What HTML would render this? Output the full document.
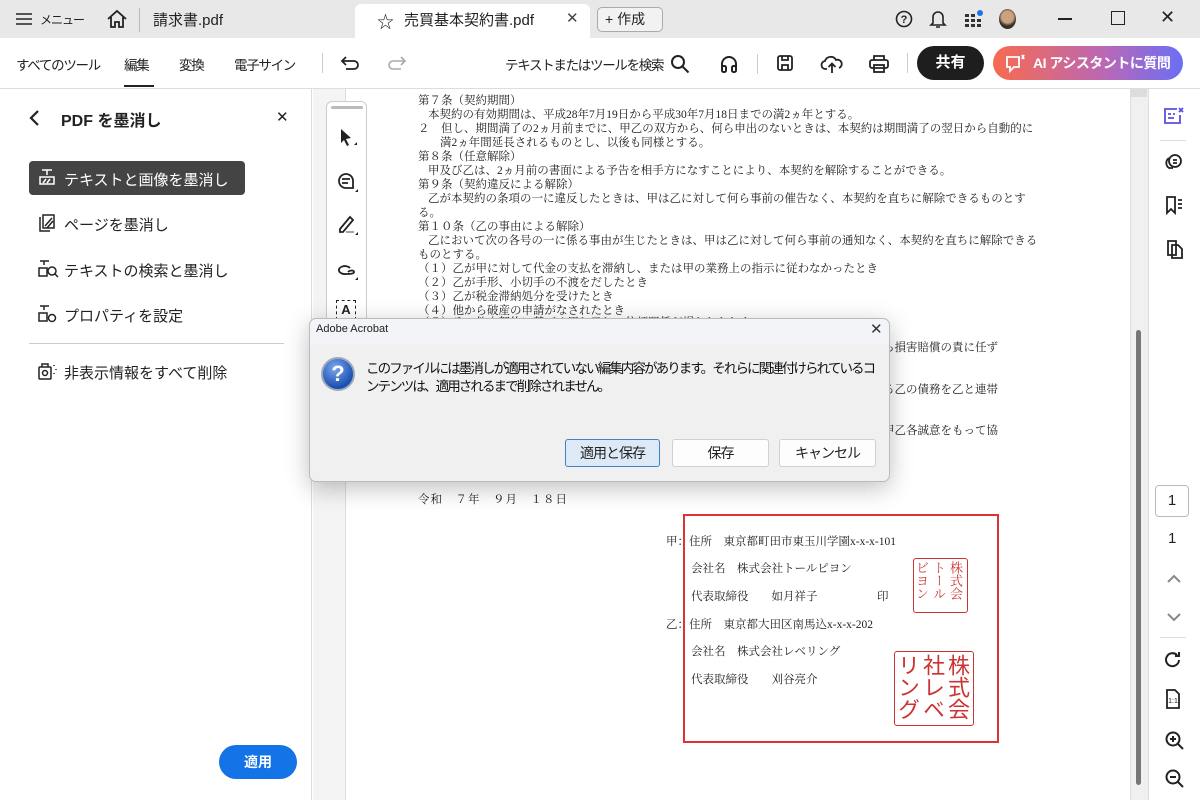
<!DOCTYPE html>
<html><head><meta charset="utf-8"><style>
*{box-sizing:border-box;margin:0;padding:0}
body{width:1200px;height:800px;overflow:hidden;position:relative;background:#fff;font-family:"Liberation Sans","Noto Sans CJK JP",sans-serif;color:#222}
.abs{position:absolute}
.tb{left:0;top:0;width:1200px;height:38px;background:#e8e8e8}
.t{position:absolute;white-space:nowrap}
.tool{left:0;top:38px;width:1200px;height:51px;background:#fff;border-bottom:1px solid #ddd}
.tt{position:absolute;white-space:nowrap;font-size:13.5px;letter-spacing:-1.3px;top:54px}
.doc{font-family:"Liberation Serif","Noto Serif CJK SC",serif;font-size:11.5px;color:#222;white-space:nowrap;position:absolute}
.side span{position:absolute;font-size:15px;white-space:nowrap}
.btn{position:absolute;top:439px;height:28px;background:#fdfdfd;border:1px solid #d0d0d0;border-radius:3px;font-size:14px;text-align:center;line-height:26px;letter-spacing:-1px}
svg{position:absolute}
.stamp{overflow:hidden;color:#c33;writing-mode:vertical-rl;border:1.5px solid #c33;border-radius:3px;position:absolute}
</style></head><body>
<div class="abs tb"></div>
<div class="abs" style="left:355px;top:4px;width:235px;height:34px;background:#fff;border-radius:6px 6px 0 0"></div>
<svg style="left:15px;top:12px" width="18" height="14"><path d="M1 2h16M1 7h16M1 12h16" stroke="#222" stroke-width="1.6"/></svg>
<div class="t" style="left:40px;top:11px;font-size:12px;letter-spacing:-1px">メニュー</div>
<svg style="left:106px;top:9px" width="22" height="20" fill="none" stroke="#222" stroke-width="1.8"><path d="M2 10L11 2l9 8M5 8v10h4v-5h4v5h4V8"/></svg>
<div class="abs" style="left:139px;top:8px;width:1px;height:24px;background:#bbb"></div>
<div class="t" style="left:153px;top:9px;font-size:15px">請求書.pdf</div>
<div class="t" style="left:377px;top:8px;font-size:17px">☆</div>
<div class="t" style="left:404px;top:9px;font-size:15px">売買基本契約書.pdf</div>
<div class="t" style="left:566px;top:9px;font-size:15px;color:#444">✕</div>
<div class="abs" style="left:597px;top:7px;width:66px;height:25px;border:1px solid #aaa;border-radius:5px;background:#f2f2f2"></div>
<div class="t" style="left:605px;top:9px;font-size:14px">+ 作成</div>
<svg style="left:895px;top:10px" width="18" height="18" fill="none" stroke="#222" stroke-width="1.6"><circle cx="9" cy="9" r="7.5"/><text x="9" y="13" font-size="11" text-anchor="middle" fill="#222" stroke="none" font-family="Liberation Sans" font-weight="bold">?</text></svg>
<svg style="left:929px;top:9px" width="18" height="20" fill="none" stroke="#222" stroke-width="1.6"><path d="M4 14V8a5 5 0 0110 0v6l2 2H2zM7 18h4"/></svg>
<svg style="left:964px;top:10px" width="20" height="18" fill="#333"><rect x="1" y="4" width="4" height="3"/><rect x="7" y="4" width="4" height="3"/><rect x="1" y="9" width="4" height="3"/><rect x="7" y="9" width="4" height="3"/><rect x="13" y="9" width="4" height="3"/><rect x="1" y="14" width="4" height="3"/><rect x="7" y="14" width="4" height="3"/><rect x="13" y="14" width="4" height="3"/><circle cx="16" cy="3" r="3" fill="#1a73e8"/></svg>
<div class="abs" style="left:999px;top:9px;width:17px;height:20px;border-radius:50%;background:radial-gradient(circle at 50% 40%,#c9a27f 0 40%,#3a3029 60%)"></div>
<div class="abs" style="left:1058px;top:18px;width:14px;height:1.5px;background:#222"></div>
<div class="abs" style="left:1111px;top:11px;width:14px;height:14px;border:1.5px solid #222"></div>
<div class="t" style="left:1160px;top:7px;font-size:18px;color:#222">✕</div>

<div class="abs tool"></div>
<div class="tt" style="left:16px">すべてのツール</div>
<div class="tt" style="left:124px">編集</div>
<div class="abs" style="left:124px;top:85px;width:30px;height:2px;background:#222"></div>
<div class="tt" style="left:179px">変換</div>
<div class="tt" style="left:234px">電子サイン</div>
<div class="abs" style="left:322px;top:53px;width:1px;height:20px;background:#ccc"></div>
<svg style="left:340px;top:55px" width="22" height="16" fill="none" stroke="#222" stroke-width="1.8"><path d="M6 2L2 6l4 4M2 6h12a4 4 0 010 8H6"/></svg>
<svg style="left:387px;top:55px" width="22" height="16" fill="none" stroke="#aaa" stroke-width="1.6"><path d="M14 2l4 4-4 4M18 6H6a4 4 0 000 8h8"/></svg>
<div class="tt" style="left:505px">テキストまたはツールを検索</div>
<svg style="left:670px;top:54px" width="20" height="20" fill="none" stroke="#222" stroke-width="2"><circle cx="8" cy="8" r="6"/><path d="M12.5 12.5l6 6"/></svg>
<svg style="left:719px;top:54px" width="20" height="20" fill="none" stroke="#222" stroke-width="2"><path d="M3 15v-5a7 7 0 0114 0v5"/><rect x="3" y="12" width="4" height="6" rx="1.5"/><rect x="13" y="12" width="4" height="6" rx="1.5"/></svg>
<div class="abs" style="left:757px;top:54px;width:1px;height:20px;background:#ccc"></div>
<svg style="left:776px;top:54px" width="18" height="18" fill="none" stroke="#222" stroke-width="1.8"><rect x="2" y="2" width="14" height="14" rx="2"/><path d="M6 2v4h6V2M6 16v-5h6v5"/></svg>
<svg style="left:820px;top:53px" width="24" height="22" fill="none" stroke="#222" stroke-width="1.8"><path d="M7 16H6a4 4 0 01-1-8 6 6 0 0111-1 4 4 0 013 8M12 20v-9M8.5 14l3.5-3.5 3.5 3.5"/></svg>
<svg style="left:868px;top:54px" width="22" height="20" fill="none" stroke="#222" stroke-width="1.8"><path d="M6 6V2h10v4"/><rect x="2" y="6" width="18" height="8" rx="2"/><rect x="6" y="11" width="10" height="7"/></svg>
<div class="abs" style="left:907px;top:53px;width:1px;height:20px;background:#ccc"></div>
<div class="abs" style="left:917px;top:46px;width:67px;height:34px;border-radius:17px;background:#1e1e1e;color:#fff;font-size:15px;text-align:center;line-height:34px;font-weight:bold">共有</div>
<div class="abs" style="left:993px;top:46px;width:190px;height:34px;border-radius:17px;background:linear-gradient(90deg,#f76b4f,#b868b7 60%,#6a6ff5);color:#fff;font-size:14px;line-height:34px;font-weight:bold;padding-left:40px;letter-spacing:-0.5px">AI アシスタントに質問</div>
<svg style="left:1005px;top:53px" width="22" height="20" fill="none" stroke="#fff" stroke-width="1.8"><path d="M2 4h12v10H9l-4 4v-4H2z"/><path d="M17 2l2 4M19 2l-2 4" /></svg>

<!-- left panel -->
<div class="abs" style="left:0;top:89px;width:312px;height:711px;background:#fff;border-right:1px solid #ddd"></div>
<svg style="left:27px;top:109px" width="14" height="18" fill="none" stroke="#222" stroke-width="2.2"><path d="M11 2L4 9l7 7"/></svg>
<div class="t" style="left:61px;top:107px;font-size:16px;font-weight:bold">PDF を墨消し</div>
<div class="t" style="left:276px;top:108px;font-size:15px">✕</div>
<div class="abs" style="left:29px;top:161px;width:216px;height:34px;border-radius:4px;background:#444"></div>
<div class="side">
<span style="left:64px;top:169px;color:#fff">テキストと画像を墨消し</span>
<span style="left:64px;top:214px">ページを墨消し</span>
<span style="left:64px;top:260px">テキストの検索と墨消し</span>
<span style="left:64px;top:305px">プロパティを設定</span>
<span style="left:64px;top:362px">非表示情報をすべて削除</span>
</div>
<svg style="left:38px;top:168px" width="18" height="18" fill="none" stroke="#fff" stroke-width="1.5"><path d="M4 2h10M9 2v5"/><rect x="2" y="9" width="14" height="7"/><path d="M5 15l3-4M9 15l3-4"/></svg>
<svg style="left:37px;top:213px" width="20" height="20" fill="none" stroke="#222" stroke-width="1.5"><path d="M3 4v14h10"/><rect x="6" y="2" width="11" height="13"/><path d="M8 13l7-8M10 15l6-7"/></svg>
<svg style="left:37px;top:259px" width="22" height="20" fill="none" stroke="#222" stroke-width="1.5"><path d="M3 2h9M7 2v4"/><rect x="2" y="9" width="8" height="8"/><circle cx="15" cy="12" r="4"/><path d="M18 15l3 3"/></svg>
<svg style="left:37px;top:304px" width="22" height="20" fill="none" stroke="#222" stroke-width="1.5"><path d="M3 2h9M7 2v4"/><rect x="2" y="9" width="8" height="8"/><circle cx="15" cy="14" r="3.5"/></svg>
<div class="abs" style="left:29px;top:343px;width:255px;height:1px;background:#ccc"></div>
<svg style="left:37px;top:361px" width="22" height="20" fill="none" stroke="#222" stroke-width="1.5"><rect x="2" y="6" width="12" height="12" rx="1"/><path d="M5 6V3h6v3"/><circle cx="8" cy="12" r="2.5"/><path d="M17 4v1M19 8v1M17 12v1"/></svg>
<div class="abs" style="left:219px;top:745px;width:78px;height:34px;border-radius:17px;background:#1473e6;color:#fff;font-size:14px;font-weight:bold;text-align:center;line-height:34px">適用</div>

<!-- doc area -->
<div class="abs" style="left:313px;top:89px;width:817px;height:711px;background:#f4f4f4"></div>
<div class="abs" style="left:345px;top:89px;width:785px;height:711px;background:#fff;border-left:1px solid #ddd"></div>
<div class="abs" style="left:326px;top:101px;width:41px;height:225px;background:#fff;border:1px solid #ccc;border-radius:6px"></div>
<div class="abs" style="left:331px;top:106px;width:32px;height:3px;background:#bbb;border-radius:2px"></div>
<svg style="left:338px;top:127px" width="20" height="22" fill="#222"><path d="M3 2l10 9-5 1 3 6-2 1-3-6-3 3z"/><path d="M16 18h3v-3z"/></svg>
<svg style="left:336px;top:171px" width="24" height="24" fill="none" stroke="#222" stroke-width="1.8"><path d="M10 3a7 7 0 100 14h7v-7a7 7 0 00-7-7zM6 8h8M6 12h6"/><path d="M19 21h3v-3z" fill="#222" stroke="none"/></svg>
<svg style="left:336px;top:213px" width="24" height="24" fill="none" stroke="#222" stroke-width="1.8"><path d="M4 16L14 4l3 3L7 19H4z"/><path d="M10 19h8" stroke="#999"/><path d="M19 22h3v-3z" fill="#222" stroke="none"/></svg>
<svg style="left:336px;top:258px" width="24" height="24" fill="none" stroke="#222" stroke-width="1.8"><path d="M14 10a6 4 0 10-4 6c3 0 8 0 8-2s-4-2-6 0"/><path d="M19 22h3v-3z" fill="#222" stroke="none"/></svg>
<div class="abs" style="left:336px;top:300px;width:20px;height:20px;border:1.5px dashed #222;font-size:13px;font-weight:bold;text-align:center;line-height:17px">A</div>

<div class="doc" style="left:418px;top:92px">第７条（契約期間）</div>
<div class="doc" style="left:428px;top:106px">本契約の有効期間は、平成28年7月19日から平成30年7月18日までの満2ヵ年とする。</div>
<div class="doc" style="left:418px;top:120px">２　但し、期間満了の2ヵ月前までに、甲乙の双方から、何ら申出のないときは、本契約は期間満了の翌日から自動的に</div>
<div class="doc" style="left:440px;top:134px">満2ヵ年間延長されるものとし、以後も同様とする。</div>
<div class="doc" style="left:418px;top:148px">第８条（任意解除）</div>
<div class="doc" style="left:428px;top:162px">甲及び乙は、2ヵ月前の書面による予告を相手方になすことにより、本契約を解除することができる。</div>
<div class="doc" style="left:418px;top:176px">第９条（契約違反による解除）</div>
<div class="doc" style="left:428px;top:190px">乙が本契約の条項の一に違反したときは、甲は乙に対して何ら事前の催告なく、本契約を直ちに解除できるものとす</div>
<div class="doc" style="left:418px;top:204px">る。</div>
<div class="doc" style="left:418px;top:218px">第１０条（乙の事由による解除）</div>
<div class="doc" style="left:428px;top:232px">乙において次の各号の一に係る事由が生じたときは、甲は乙に対して何ら事前の通知なく、本契約を直ちに解除できる</div>
<div class="doc" style="left:418px;top:246px">ものとする。</div>
<div class="doc" style="left:418px;top:260px">（１）乙が甲に対して代金の支払を滞納し、または甲の業務上の指示に従わなかったとき</div>
<div class="doc" style="left:418px;top:274px">（２）乙が手形、小切手の不渡をだしたとき</div>
<div class="doc" style="left:418px;top:288px">（３）乙が税金滞納処分を受けたとき</div>
<div class="doc" style="left:418px;top:302px">（４）他から破産の申請がなされたとき</div>
<div class="doc" style="left:418px;top:314px">（５）その他本契約に基づく甲と乙との信頼関係が損われたとき</div>
<div class="doc" style="left:860px;top:339px">て何ら損害賠償の責に任ず</div>
<div class="doc" style="left:860px;top:381px">対する乙の債務を乙と連帯</div>
<div class="doc" style="left:860px;top:422px">は、甲乙各誠意をもって協</div>
<div class="doc" style="left:418px;top:491px;letter-spacing:1px">令和　７年　９月　１８日</div>

<div class="abs" style="left:683px;top:514px;width:316px;height:229px;border:2px solid #d33"></div>
<div class="doc" style="left:666px;top:533px">甲：住所　東京都町田市東玉川学園x-x-x-101</div>
<div class="doc" style="left:691px;top:560px">会社名　株式会社トールピヨン</div>
<div class="doc" style="left:691px;top:588px">代表取締役　　如月祥子</div>
<div class="doc" style="left:877px;top:588px">印</div>
<div class="doc" style="left:666px;top:616px">乙：住所　東京都大田区南馬込x-x-x-202</div>
<div class="doc" style="left:691px;top:643px">会社名　株式会社レベリング</div>
<div class="doc" style="left:691px;top:671px">代表取締役　　刈谷亮介</div>
<div class="stamp" style="left:913px;top:558px;width:55px;height:55px;font-size:13px;line-height:17px;padding:2px;font-family:'Noto Serif CJK SC',serif">株式会トールビヨン</div>
<div class="stamp" style="left:894px;top:651px;width:80px;height:75px;font-size:22px;line-height:25px;padding:2px;font-family:'Noto Sans CJK JP',sans-serif">株式会社レベリング</div>

<!-- scrollbar -->
<div class="abs" style="left:1130px;top:89px;width:18px;height:711px;background:#f0f0f0;border-left:1px solid #ddd"></div>
<div class="abs" style="left:1130px;top:89px;width:17px;height:8px;background:#ddd"></div>
<div class="abs" style="left:1136px;top:330px;width:5px;height:455px;background:#777;border-radius:3px"></div>
<!-- right rail -->
<div class="abs" style="left:1148px;top:89px;width:52px;height:711px;background:#fff;border-left:1px solid #ddd"></div>
<svg style="left:1163px;top:106px" width="22" height="20" fill="none" stroke="#5b4ee0" stroke-width="1.8"><path d="M14 3H2v14h15V9"/><path d="M5 8h3M5 12h6M10 8h2"/><path d="M16 2l4 4M20 2l-4 4"/></svg>
<div class="abs" style="left:1160px;top:140px;width:26px;height:1px;background:#ddd"></div>
<svg style="left:1163px;top:152px" width="22" height="20" fill="none" stroke="#222" stroke-width="1.8"><circle cx="12" cy="9" r="6"/><path d="M6 6a6 6 0 000 10h4M10 8h4M10 11h4"/></svg>
<svg style="left:1164px;top:195px" width="20" height="20" fill="none" stroke="#222" stroke-width="1.8"><path d="M3 2h8v16l-4-4-4 4zM14 5h4M14 9h4M14 13h4"/></svg>
<svg style="left:1164px;top:237px" width="20" height="22" fill="none" stroke="#222" stroke-width="1.8"><path d="M4 4h8v14H4z"/><path d="M8 8h6l4 4v9H8z"/></svg>
<div class="abs" style="left:1155px;top:485px;width:34px;height:32px;border:1px solid #bbb;border-radius:4px;text-align:center;line-height:30px;font-size:15px">1</div>
<div class="t" style="left:1168px;top:530px;font-size:15px">1</div>
<svg style="left:1165px;top:572px" width="18" height="14" fill="none" stroke="#888" stroke-width="2"><path d="M3 10l6-6 6 6"/></svg>
<svg style="left:1165px;top:610px" width="18" height="14" fill="none" stroke="#888" stroke-width="2"><path d="M3 4l6 6 6-6"/></svg>
<div class="abs" style="left:1160px;top:637px;width:26px;height:1px;background:#ddd"></div>
<svg style="left:1163px;top:650px" width="20" height="20" fill="none" stroke="#222" stroke-width="2"><path d="M16 10a6.5 6.5 0 11-2-5M16 2v4h-4"/></svg>
<svg style="left:1163px;top:688px" width="22" height="22" fill="none" stroke="#222" stroke-width="1.8"><path d="M4 2h8l4 4v14H4z"/><text x="10" y="15" font-size="7" text-anchor="middle" fill="#222" stroke="none" font-family="Liberation Sans">1:1</text></svg>
<svg style="left:1164px;top:730px" width="22" height="22" fill="none" stroke="#222" stroke-width="2"><circle cx="9" cy="9" r="6.5"/><path d="M14 14l5 5M6 9h6M9 6v6"/></svg>
<svg style="left:1164px;top:768px" width="22" height="22" fill="none" stroke="#222" stroke-width="2"><circle cx="9" cy="9" r="6.5"/><path d="M14 14l5 5M6 9h6"/></svg>

<!-- dialog -->
<div class="abs" style="left:309px;top:318px;width:581px;height:164px;background:#f0f0f0;border:1px solid #bbb;border-radius:7px;box-shadow:0 6px 24px rgba(0,0,0,.25)"></div>
<div class="abs" style="left:310px;top:319px;width:579px;height:25px;background:#f3f4f8;border-radius:7px 7px 0 0"></div>
<div class="t" style="left:316px;top:323px;font-size:11px">Adobe Acrobat</div>
<div class="t" style="left:870px;top:320px;font-size:15px;color:#333">✕</div>
<div class="abs" style="left:321px;top:357px;width:34px;height:34px;border-radius:50%;background:radial-gradient(circle at 40% 30%,#7aa8f0,#1d4fb0 70%);border:2px solid #9ab;color:#fff;font-weight:bold;font-size:22px;text-align:center;line-height:29px">?</div>
<div class="t" style="left:366px;top:357px;font-size:13.5px;letter-spacing:-1.9px;color:#111">このファイルには墨消しが適用されていない編集内容があります。それらに関連付けられているコ</div>
<div class="t" style="left:366px;top:375px;font-size:13.5px;letter-spacing:-1.9px;color:#111">ンテンツは、適用されるまで削除されません。</div>
<div class="btn" style="left:565px;width:95px;background:#dde9f6;border:1.5px solid #3d84c6">適用と保存</div>
<div class="btn" style="left:672px;width:97px">保存</div>
<div class="btn" style="left:779px;width:97px">キャンセル</div>
</body></html>
